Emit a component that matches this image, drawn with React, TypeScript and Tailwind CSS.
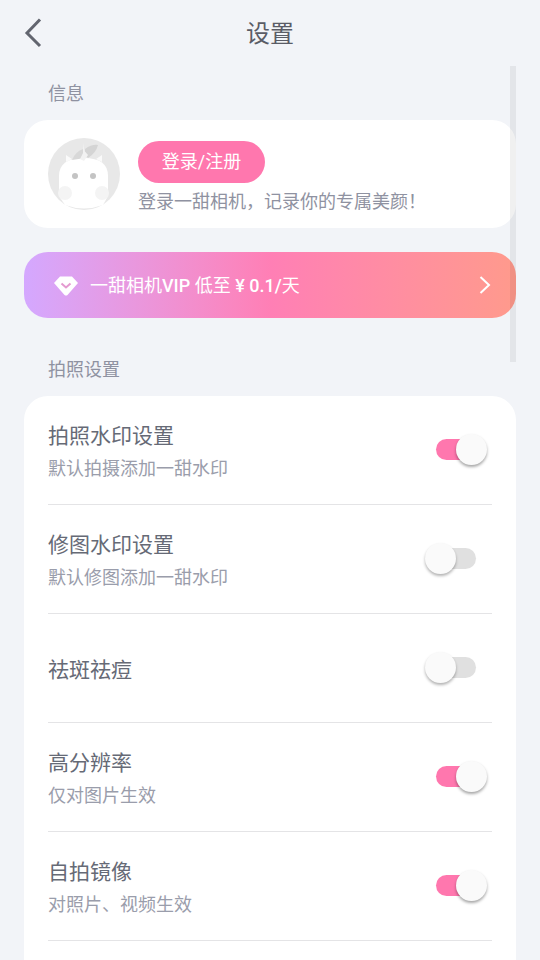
const cjk = "font-['Roboto','Noto_Sans_CJK_SC',sans-serif]";

function Toggle({ on }: { on: boolean }) {
  return (
    <div className="relative w-[64px] h-[36px] shrink-0">
      <div className={on ? "absolute left-[12px] top-[7px] w-[40px] h-[21px] rounded-full bg-[#ff77ae]" : "absolute left-[12px] top-[7px] w-[40px] h-[21px] rounded-full bg-[#e0e0e0]"} />
      <div className={on ? "absolute left-[32px] top-[2px] w-[31px] h-[31px] rounded-full bg-[#fafafa] shadow-[0_2px_3px_rgba(0,0,0,0.35)]" : "absolute left-[1px] top-[2px] w-[31px] h-[31px] rounded-full bg-[#fafafa] shadow-[0_2px_3px_rgba(0,0,0,0.3)]"} />
    </div>
  );
}

function Row({ title, sub, on, last }: { title: string; sub?: string; on: boolean; last?: boolean }) {
  return (
    <div className={last ? "h-[109px] flex items-center justify-between" : "h-[109px] flex items-center justify-between border-b border-[#e4e4e6]"}>
      <div className="flex flex-col pt-[3px]">
        <div className="text-[21px] leading-[30px] text-[#666a76]">{title}</div>
        {sub && <div className="text-[18px] leading-[26px] mt-[5px] text-[#9a9dab]">{sub}</div>}
      </div>
      <div className="mr-[4px]">
        <Toggle on={on} />
      </div>
    </div>
  );
}

function Avatar() {
  return (
    <svg width="72" height="72" viewBox="0 0 72 72" className="shrink-0">
      <circle cx="36" cy="36" r="36" fill="#e8e8e8" />
      <path d="M17 67 L11 58 L11 38 Q11 20 36 20 Q60 20 60 38 L60 58 L55 67 Q36 74 17 67 Z" fill="#ffffff" />
      <path d="M18 24 L18 17 L24 21 Z M54 24 L54 17 L48 21 Z" fill="#fafafa" />
      <path d="M24 22 Q27 14 35 11 L37 20 Z" fill="#d8d8d8" />
      <path d="M37 11 Q44 6 50 7 Q48 15 40 20 L37 17 Z" fill="#d4d4d4" />
      <path d="M35 5 L36.500 13 L40 17 L36 23 L32 21 L35 15 Z" fill="#f2f2f2" />
      <circle cx="27" cy="38" r="3" fill="#c4c4c4" />
      <circle cx="45" cy="38" r="3" fill="#c4c4c4" />
      <circle cx="17" cy="55" r="7" fill="#f4f4f4" />
      <circle cx="54" cy="55" r="7" fill="#f4f4f4" />
    </svg>
  );
}

export default function App() {
  return (
    <div className={`relative w-[540px] h-[960px] overflow-hidden bg-[#f2f4f8] ${cjk}`}>
      <header className="relative h-[66px] flex items-center justify-center">
        <svg className="absolute left-[24px] top-[18px]" width="20" height="30" viewBox="0 0 20 30" fill="none">
          <path d="M16 2.500 L3 16 L16 29" stroke="#62656f" strokeWidth="3" transform="translate(0,-1)" />
        </svg>
        <div className="pt-[2px] text-[24px] leading-[32px] text-[#5a5c66]">设置</div>
      </header>

      <div className="h-[54px] pl-[48px] pt-[15px] text-[18px] leading-[26px] text-[#8f92a1]">信息</div>

      <section className="mx-[24px] h-[108px] rounded-[24px] bg-white flex items-center pl-[24px] gap-[18px]">
        <Avatar />
        <div className="flex flex-col items-start pt-[7px]">
          <div className="w-[127px] h-[42px] rounded-full bg-[#ff77ae] flex items-center justify-center text-[18px] text-white">登录/注册</div>
          <div className="mt-[6px] text-[18px] leading-[26px] text-[#8f92a1]">登录一甜相机，记录你的专属美颜！</div>
        </div>
      </section>

      <section className="mt-[24px] mx-[24px] h-[66px] rounded-[24px] bg-gradient-to-r from-[#d4a8ff] via-[#ff7fb5] to-[#ff9a8c] flex items-center pl-[30px] pr-[24px]">
        <svg width="24" height="20" viewBox="0 0 24 20" className="shrink-0 mt-[1px]">
          <path d="M6 0.500 H18 L24 7 L13.500 19 Q12 20 10.500 19 L0 7 Z" fill="#ffffff" />
          <path d="M7.500 7.500 L12 11.500 L16.500 7.500" fill="none" stroke="#e49ad0" strokeWidth="2" />
        </svg>
        <div className="ml-[12px] mt-[2px] text-[18px] leading-[26px] text-white">
          一甜相机<span className="font-medium">VIP</span> 低至 <span className="font-medium">¥ 0.1/</span>天
        </div>
        <svg className="ml-auto" width="14" height="20" viewBox="0 0 14 20" fill="none">
          <path d="M2.500 2 L11 10 L2.500 18" stroke="#ffffff" strokeWidth="2" />
        </svg>
      </section>

      <div className="h-[78px] pl-[48px] pt-[39px] text-[18px] leading-[26px] text-[#8f92a1]">拍照设置</div>

      <section className="mx-[24px] rounded-t-[24px] bg-white px-[24px] h-[700px]">
        <Row title="拍照水印设置" sub="默认拍摄添加一甜水印" on />
        <Row title="修图水印设置" sub="默认修图添加一甜水印" on={false} />
        <Row title="祛斑祛痘" on={false} />
        <Row title="高分辨率" sub="仅对图片生效" on />
        <Row title="自拍镜像" sub="对照片、视频生效" on />
      </section>

      <div className="absolute left-[510px] top-[66px] w-[6px] h-[296px] bg-[rgba(0,0,0,0.06)]" />
    </div>
  );
}
